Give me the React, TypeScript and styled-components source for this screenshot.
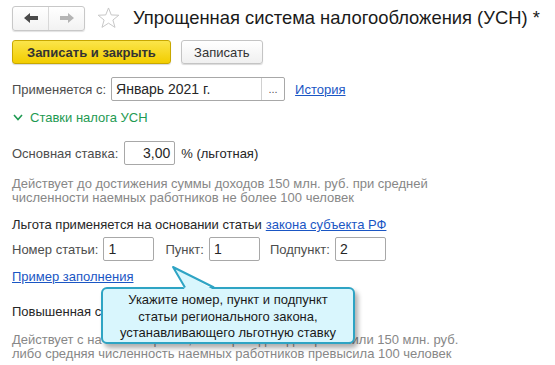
import React from "react";
import styled, { createGlobalStyle } from "styled-components";

const Global = createGlobalStyle`
  body {
    margin: 0;
    background: #ffffff;
    font-family: "Liberation Sans", Arial, sans-serif;
    font-size: 13px;
    color: #404040;
  }
`;

const Page = styled.div`
  position: relative;
  width: 555px;
  height: 365px;
  padding: 5px 12px 0;
  box-sizing: border-box;
  overflow: hidden;
`;

const Header = styled.div`
  display: flex;
  align-items: center;
  height: 26px;
`;

const NavGroup = styled.div`
  display: flex;
  width: 73px;
  height: 25px;
  border: 1px solid #c8c8c8;
  border-radius: 3px;
  box-sizing: border-box;
  background: linear-gradient(#ffffff, #f2f2f2);
  box-shadow: 0 1px 1px rgba(0, 0, 0, 0.12);
`;

const NavButton = styled.div<{ $last?: boolean }>`
  flex: 1;
  display: flex;
  align-items: center;
  justify-content: center;
  border-left: ${(p) => (p.$last ? "1px solid #d8d8d8" : "none")};
`;

const StarBox = styled.div`
  margin-left: 12px;
  display: flex;
  align-items: center;
`;

const Title = styled.h1`
  margin: 0 0 0 13px;
  font-size: 18.4px;
  font-weight: normal;
  color: #1a1a1a;
  white-space: nowrap;
`;

const Toolbar = styled.div`
  display: flex;
  gap: 10px;
  margin-top: 9px;
`;

const Button = styled.button<{ $primary?: boolean }>`
  height: 24px;
  padding: 0 ${(p) => (p.$primary ? 14 : 12)}px;
  box-sizing: border-box;
  font-family: inherit;
  font-size: 13px;
  font-weight: ${(p) => (p.$primary ? "bold" : "normal")};
  color: #333333;
  border-radius: 3px;
  border: 1px solid ${(p) => (p.$primary ? "#c8a800" : "#c4c4c4")};
  background: ${(p) =>
    p.$primary
      ? "linear-gradient(#fbe54a, #f2cd00)"
      : "linear-gradient(#ffffff, #f0f0f0)"};
  box-shadow: 0 1px 1px rgba(0, 0, 0, 0.15);
`;

const Row = styled.div<{ $top: number; $gap?: number }>`
  display: flex;
  align-items: center;
  margin-top: ${(p) => p.$top}px;
  gap: ${(p) => p.$gap ?? 6}px;
  white-space: nowrap;
`;

const Label = styled.span<{ $dark?: boolean; $ml?: number }>`
  color: ${(p) => (p.$dark ? "#262626" : "#4d4d4d")};
  margin-left: ${(p) => p.$ml ?? 0}px;
`;

const Input = styled.div<{ $w: number; $right?: boolean }>`
  width: ${(p) => p.$w}px;
  height: 24px;
  box-sizing: border-box;
  border: 1px solid #a8a8a8;
  border-radius: 2px;
  display: flex;
  align-items: center;
  justify-content: ${(p) => (p.$right ? "flex-end" : "flex-start")};
  padding: 0 4px;
  color: #262626;
  font-size: 14px;
  background: #ffffff;
`;

const SelectInput = styled.div`
  display: flex;
  width: 174px;
  height: 24px;
  box-sizing: border-box;
  border: 1px solid #a8a8a8;
  border-radius: 2px;
  color: #262626;
  font-size: 14px;
`;

const SelectValue = styled.div`
  flex: 1;
  display: flex;
  align-items: center;
  padding: 0 4px;
`;

const SelectButton = styled.div`
  width: 22px;
  border-left: 1px solid #d0d0d0;
  display: flex;
  align-items: center;
  justify-content: center;
  color: #555555;
  font-size: 11px;
`;

const Link = styled.a<{ $ml?: number }>`
  color: #1a56c4;
  text-decoration: underline;
  margin-left: ${(p) => p.$ml ?? 0}px;
`;

const GroupTitle = styled.div`
  display: flex;
  align-items: center;
  gap: 7px;
  margin-top: 8px;
  padding-left: 1px;
  color: #1e9a52;
  height: 17px;
`;

const Note = styled.p<{ $top: number }>`
  margin: ${(p) => p.$top}px 0 0;
  color: #878787;
  line-height: 14px;
`;

const Tooltip = styled.div`
  position: absolute;
  left: 101px;
  top: 287px;
  width: 254px;
  height: 57px;
  box-sizing: border-box;
  border: 2px solid #2ea4c4;
  border-radius: 6px;
  background: #d9f6fd;
  box-shadow: 3px 4px 5px rgba(0, 0, 0, 0.32);
  color: #1a1a1a;
  text-align: center;
  font-size: 13px;
  line-height: 16.5px;
  padding-top: 3px;
`;

const Pointer = styled.svg`
  position: absolute;
  left: 170px;
  top: 265px;
  overflow: visible;
`;

const ArrowIcon = ({ dir, color }: { dir: "left" | "right"; color: string }) => (
  <svg width="14" height="10" viewBox="0 0 14 10">
    <g transform={dir === "right" ? "translate(14,0) scale(-1,1)" : undefined}>
      <path d="M0 5 L6 0 L6 3 L14 3 L14 7 L6 7 L6 10 Z" fill={color} />
    </g>
  </svg>
);

const App = () => {
  return (
    <>
      <Global />
      <Page>
        <Header>
          <NavGroup>
            <NavButton>
              <ArrowIcon dir="left" color="#4a4a4a" />
            </NavButton>
            <NavButton $last>
              <ArrowIcon dir="right" color="#b4b4b4" />
            </NavButton>
          </NavGroup>
          <StarBox>
            <svg width="23" height="22" viewBox="0 0 24 23">
              <path
                d="M12 1 L14.9 8.3 L22.8 8.6 L16.6 13.6 L18.8 21.3 L12 16.9 L5.2 21.3 L7.4 13.6 L1.2 8.6 L9.1 8.3 Z"
                fill="none"
                stroke="#c4c4c4"
                strokeWidth="1"
                strokeLinejoin="round"
              />
            </svg>
          </StarBox>
          <Title>Упрощенная система налогообложения (УСН) *</Title>
        </Header>

        <Toolbar>
          <Button $primary>Записать и закрыть</Button>
          <Button style={{ width: 82 }}>Записать</Button>
        </Toolbar>

        <Row $top={13} $gap={5}>
          <Label>Применяется с:</Label>
          <SelectInput>
            <SelectValue>Январь 2021 г.</SelectValue>
            <SelectButton>...</SelectButton>
          </SelectInput>
          <Link $ml={5}>История</Link>
        </Row>

        <GroupTitle>
          <svg width="10" height="7" viewBox="0 0 10 7">
            <path d="M1 1 L5 5.5 L9 1" fill="none" stroke="#1e9a52" strokeWidth="1.6" />
          </svg>
          Ставки налога УСН
        </GroupTitle>

        <Row $top={15}>
          <Label>Основная ставка:</Label>
          <Input $w={51} $right>3,00</Input>
          <Label $dark>% (льготная)</Label>
        </Row>

        <Note $top={12}>
          Действует до достижения суммы доходов 150 млн. руб. при средней
          <br />
          численности наемных работников не более 100 человек
        </Note>

        <Row $top={12} $gap={4}>
          <Label $dark>Льгота применяется на основании статьи</Label>
          <Link>закона субъекта РФ</Link>
        </Row>

        <Row $top={5} $gap={5}>
          <Label>Номер статьи:</Label>
          <Input $w={51}>1</Input>
          <Label $ml={6}>Пункт:</Label>
          <Input $w={51}>1</Input>
          <Label $ml={5}>Подпункт:</Label>
          <Input $w={51}>2</Input>
        </Row>

        <Row $top={8}>
          <Link>Пример заполнения</Link>
        </Row>

        <Row $top={20}>
          <Label $dark>Повышенная ставка</Label>
        </Row>

        <Note $top={14}>
          Действует с начала квартала, в котором доходы превысили 150 млн. руб.
          <br />
          либо средняя численность наемных работников превысила 100 человек
        </Note>

        <Tooltip>
          Укажите номер, пункт и подпункт
          <br />
          статьи регионального закона,
          <br />
          устанавливающего льготную ставку
        </Tooltip>
        <Pointer width="50" height="26">
          <path d="M15 25 L3 2 L44 25 Z" fill="#d9f6fd" stroke="none" />
          <path d="M15 22.5 L3 2 L44 22.5" fill="none" stroke="#2ea4c4" strokeWidth="2" strokeLinejoin="round" />
        </Pointer>
      </Page>
    </>
  );
};

export default App;
